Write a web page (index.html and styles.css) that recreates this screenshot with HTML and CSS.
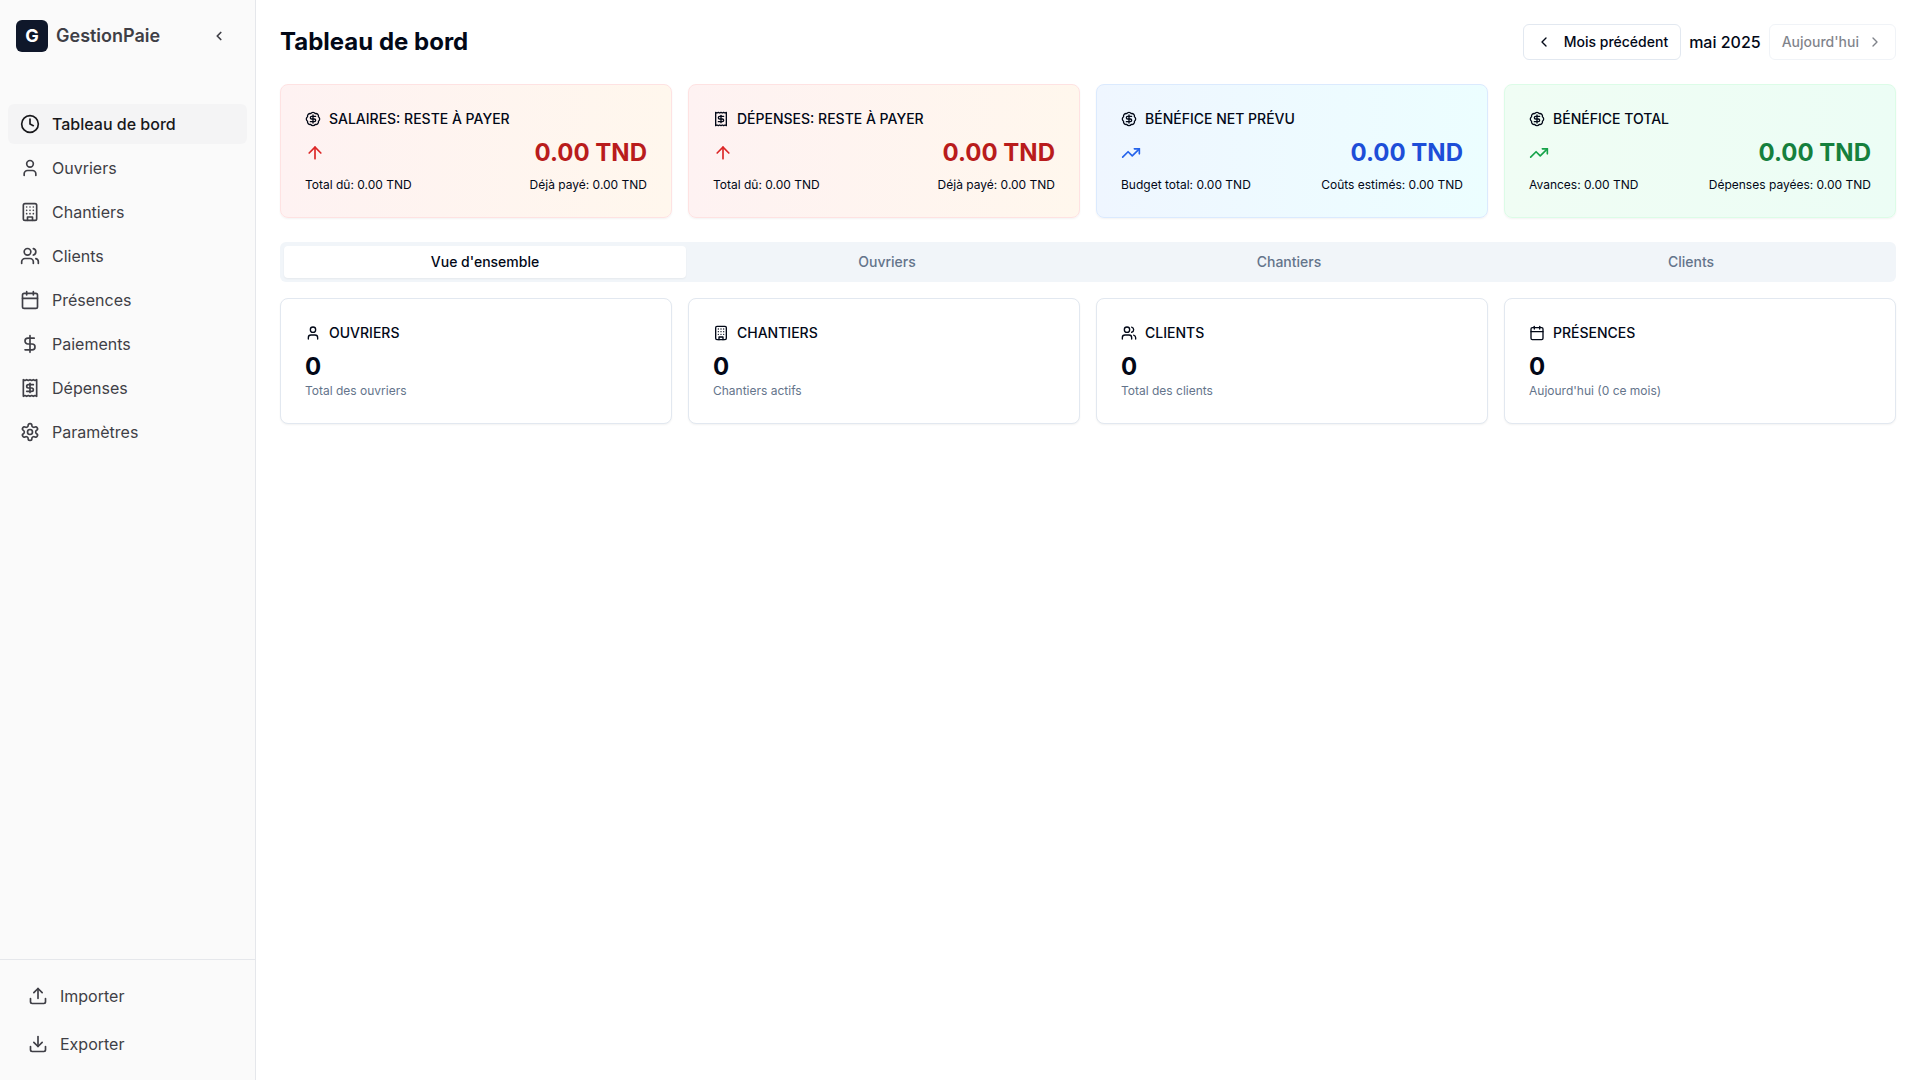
FILE: index.html
```html
<!DOCTYPE html>
<html lang="fr">
<head>
  <meta charset="UTF-8" />
  <meta name="viewport" content="width=device-width, initial-scale=1.0"/>
  <title>Tableau de bord - GestionPaie</title>
  <link rel="stylesheet" href="styles.css">
</head>
<body>
  <!-- Icons -->
  <svg class="icon-defs" aria-hidden="true">
    <symbol id="clock" viewBox="0 0 24 24"><circle cx="12" cy="12" r="10"/><path d="M12 6v6l4 2"/></symbol>
    <symbol id="user" viewBox="0 0 24 24"><path d="M19 21v-2a4 4 0 0 0-4-4H9a4 4 0 0 0-4 4v2"/><circle cx="12" cy="7" r="4"/></symbol>
    <symbol id="users" viewBox="0 0 24 24"><path d="M16 21v-2a4 4 0 0 0-4-4H6a4 4 0 0 0-4 4v2"/><circle cx="9" cy="7" r="4"/><path d="M22 21v-2a4 4 0 0 0-3-3.87"/><path d="M16 3.13a4 4 0 0 1 0 7.75"/></symbol>
    <symbol id="building" viewBox="0 0 24 24"><rect width="16" height="20" x="4" y="2" rx="2" ry="2"/><path d="M9 22v-4h6v4"/><path d="M8 6h.01"/><path d="M16 6h.01"/><path d="M12 6h.01"/><path d="M12 10h.01"/><path d="M12 14h.01"/><path d="M16 10h.01"/><path d="M16 14h.01"/><path d="M8 10h.01"/><path d="M8 14h.01"/></symbol>
    <symbol id="calendar" viewBox="0 0 24 24"><path d="M8 2v4"/><path d="M16 2v4"/><rect width="18" height="18" x="3" y="4" rx="2"/><path d="M3 10h18"/></symbol>
    <symbol id="dollar" viewBox="0 0 24 24"><path d="M12 2v20"/><path d="M17 5H9.5a3.5 3.5 0 0 0 0 7h5a3.5 3.5 0 0 1 0 7H6"/></symbol>
    <symbol id="receipt" viewBox="0 0 24 24"><path d="M4 2v20l2-1 2 1 2-1 2 1 2-1 2 1 2-1 2 1V2l-2 1-2-1-2 1-2-1-2 1-2-1-2 1Z"/><path d="M16 8h-6a2 2 0 1 0 0 4h4a2 2 0 1 1 0 4H8"/><path d="M12 17.5v-11"/></symbol>
    <symbol id="settings" viewBox="0 0 24 24"><path d="M12.22 2h-.44a2 2 0 0 0-2 2v.18a2 2 0 0 1-1 1.73l-.43.25a2 2 0 0 1-2 0l-.15-.08a2 2 0 0 0-2.73.73l-.22.38a2 2 0 0 0 .73 2.73l.15.1a2 2 0 0 1 1 1.72v.51a2 2 0 0 1-1 1.74l-.15.09a2 2 0 0 0-.73 2.73l.22.38a2 2 0 0 0 2.73.73l.15-.08a2 2 0 0 1 2 0l.43.25a2 2 0 0 1 1 1.73V20a2 2 0 0 0 2 2h.44a2 2 0 0 0 2-2v-.18a2 2 0 0 1 1-1.73l.43-.25a2 2 0 0 1 2 0l.15.08a2 2 0 0 0 2.73-.73l.22-.39a2 2 0 0 0-.73-2.73l-.15-.08a2 2 0 0 1-1-1.74v-.5a2 2 0 0 1 1-1.74l.15-.09a2 2 0 0 0 .73-2.73l-.22-.38a2 2 0 0 0-2.73-.73l-.15.08a2 2 0 0 1-2 0l-.43-.25a2 2 0 0 1-1-1.73V4a2 2 0 0 0-2-2z"/><circle cx="12" cy="12" r="3"/></symbol>
    <symbol id="upload" viewBox="0 0 24 24"><path d="M21 15v4a2 2 0 0 1-2 2H5a2 2 0 0 1-2-2v-4"/><path d="m17 8-5-5-5 5"/><path d="M12 3v12"/></symbol>
    <symbol id="download" viewBox="0 0 24 24"><path d="M21 15v4a2 2 0 0 1-2 2H5a2 2 0 0 1-2-2v-4"/><path d="m7 10 5 5 5-5"/><path d="M12 15V3"/></symbol>
    <symbol id="badge-dollar" viewBox="0 0 24 24"><path d="M3.85 8.62a4 4 0 0 1 4.78-4.77 4 4 0 0 1 6.74 0 4 4 0 0 1 4.78 4.78 4 4 0 0 1 0 6.74 4 4 0 0 1-4.77 4.78 4 4 0 0 1-6.75 0 4 4 0 0 1-4.78-4.77 4 4 0 0 1 0-6.76Z"/><path d="M16 8h-6a2 2 0 1 0 0 4h4a2 2 0 1 1 0 4H8"/><path d="M12 18V6"/></symbol>
    <symbol id="arrow-up" viewBox="0 0 24 24"><path d="m5 12 7-7 7 7"/><path d="M12 19V5"/></symbol>
    <symbol id="trending-up" viewBox="0 0 24 24"><path d="m22 7-8.5 8.5-5-5L2 17"/><path d="M16 7h6v6"/></symbol>
    <symbol id="chevron-left" viewBox="0 0 24 24"><path d="m15 18-6-6 6-6"/></symbol>
    <symbol id="chevron-right" viewBox="0 0 24 24"><path d="m9 18 6-6-6-6"/></symbol>
  </svg>

  <div class="layout">
    <aside class="sidebar">
      <div class="sidebar-header">
        <div class="brand">
          <span class="logo">G</span>
          <span class="brand-name">GestionPaie</span>
        </div>
        <button type="button" class="collapse-btn" aria-label="Réduire le menu">
          <svg class="icon-xs"><use href="#chevron-left"/></svg>
        </button>
      </div>

      <nav class="sidebar-nav">
        <a href="#" class="nav-link active"><svg class="icon"><use href="#clock"/></svg>Tableau de bord</a>
        <a href="#" class="nav-link"><svg class="icon"><use href="#user"/></svg>Ouvriers</a>
        <a href="#" class="nav-link"><svg class="icon"><use href="#building"/></svg>Chantiers</a>
        <a href="#" class="nav-link"><svg class="icon"><use href="#users"/></svg>Clients</a>
        <a href="#" class="nav-link"><svg class="icon"><use href="#calendar"/></svg>Présences</a>
        <a href="#" class="nav-link"><svg class="icon"><use href="#dollar"/></svg>Paiements</a>
        <a href="#" class="nav-link"><svg class="icon"><use href="#receipt"/></svg>Dépenses</a>
        <a href="#" class="nav-link"><svg class="icon"><use href="#settings"/></svg>Paramètres</a>
      </nav>

      <div class="sidebar-footer">
        <button type="button" class="nav-link"><svg class="icon"><use href="#upload"/></svg>Importer</button>
        <button type="button" class="nav-link"><svg class="icon"><use href="#download"/></svg>Exporter</button>
      </div>
    </aside>

    <main class="content">
      <header class="page-header">
        <h1>Tableau de bord</h1>
        <div class="month-nav">
          <button type="button" class="month-btn prev"><svg class="icon-sm"><use href="#chevron-left"/></svg>Mois précédent</button>
          <span class="month-label">mai 2025</span>
          <button type="button" class="month-btn" disabled>Aujourd'hui<svg class="icon-sm"><use href="#chevron-right"/></svg></button>
        </div>
      </header>

      <section class="card-grid">
        <div class="card card-red">
          <h2 class="card-title"><svg class="icon-sm"><use href="#badge-dollar"/></svg>SALAIRES: RESTE À PAYER</h2>
          <div class="card-row">
            <svg class="icon"><use href="#arrow-up"/></svg>
            <span class="card-value">0.00 TND</span>
          </div>
          <div class="card-details"><span>Total dû: 0.00 TND</span><span>Déjà payé: 0.00 TND</span></div>
        </div>

        <div class="card card-red">
          <h2 class="card-title"><svg class="icon-sm"><use href="#receipt"/></svg>DÉPENSES: RESTE À PAYER</h2>
          <div class="card-row">
            <svg class="icon"><use href="#arrow-up"/></svg>
            <span class="card-value">0.00 TND</span>
          </div>
          <div class="card-details"><span>Total dû: 0.00 TND</span><span>Déjà payé: 0.00 TND</span></div>
        </div>

        <div class="card card-blue">
          <h2 class="card-title"><svg class="icon-sm"><use href="#badge-dollar"/></svg>BÉNÉFICE NET PRÉVU</h2>
          <div class="card-row">
            <svg class="icon"><use href="#trending-up"/></svg>
            <span class="card-value">0.00 TND</span>
          </div>
          <div class="card-details"><span>Budget total: 0.00 TND</span><span>Coûts estimés: 0.00 TND</span></div>
        </div>

        <div class="card card-green">
          <h2 class="card-title"><svg class="icon-sm"><use href="#badge-dollar"/></svg>BÉNÉFICE TOTAL</h2>
          <div class="card-row">
            <svg class="icon"><use href="#trending-up"/></svg>
            <span class="card-value">0.00 TND</span>
          </div>
          <div class="card-details"><span>Avances: 0.00 TND</span><span>Dépenses payées: 0.00 TND</span></div>
        </div>
      </section>

      <section class="overview">
        <div class="tabs" role="tablist">
          <button type="button" class="tab active" role="tab" aria-selected="true">Vue d'ensemble</button>
          <button type="button" class="tab" role="tab" aria-selected="false">Ouvriers</button>
          <button type="button" class="tab" role="tab" aria-selected="false">Chantiers</button>
          <button type="button" class="tab" role="tab" aria-selected="false">Clients</button>
        </div>

        <div class="card-grid">
          <div class="card">
            <h2 class="card-title"><svg class="icon-sm"><use href="#user"/></svg>OUVRIERS</h2>
            <div class="card-value">0</div>
            <p class="card-note">Total des ouvriers</p>
          </div>
          <div class="card">
            <h2 class="card-title"><svg class="icon-sm"><use href="#building"/></svg>CHANTIERS</h2>
            <div class="card-value">0</div>
            <p class="card-note">Chantiers actifs</p>
          </div>
          <div class="card">
            <h2 class="card-title"><svg class="icon-sm"><use href="#users"/></svg>CLIENTS</h2>
            <div class="card-value">0</div>
            <p class="card-note">Total des clients</p>
          </div>
          <div class="card">
            <h2 class="card-title"><svg class="icon-sm"><use href="#calendar"/></svg>PRÉSENCES</h2>
            <div class="card-value">0</div>
            <p class="card-note">Aujourd'hui (0 ce mois)</p>
          </div>
        </div>
      </section>
    </main>
  </div>
</body>
</html>
```

FILE: styles.css
```css
* {
  box-sizing: border-box;
}

body {
  margin: 0;
  background-color: white;
  font-family: Inter, "Liberation Sans", sans-serif;
  font-size: 16px;
  line-height: 24px;
  color: #020817;
}

h1, h2, p {
  margin: 0;
}

button {
  font: inherit;
  color: inherit;
  background: none;
  border: none;
  padding: 0;
  cursor: pointer;
}

.icon-defs {
  display: none;
}

.icon, .icon-sm, .icon-xs {
  width: 20px;
  height: 20px;
  flex-shrink: 0;
  fill: none;
  stroke: currentColor;
  stroke-width: 2;
  stroke-linecap: round;
  stroke-linejoin: round;
}

.icon-sm {
  width: 16px;
  height: 16px;
}

.icon-xs {
  width: 14px;
  height: 14px;
  stroke-width: 3;
}

.layout {
  display: flex;
  min-height: 100vh;
}

/* Sidebar */
.sidebar {
  display: flex;
  flex-direction: column;
  flex-shrink: 0;
  width: 256px;
  background-color: #fafafa;
  border-right: 1px solid #e5e7eb;
  color: #3f3f46;
}

.sidebar-header {
  display: flex;
  align-items: center;
  justify-content: space-between;
  padding: 16px;
}

.brand {
  display: flex;
  align-items: center;
  gap: 8px;
}

.logo {
  display: flex;
  align-items: center;
  justify-content: center;
  width: 32px;
  height: 32px;
  border-radius: 6px;
  background-color: #0f172a;
  color: white;
  font-size: 18px;
  font-weight: bold;
}

.brand-name {
  font-size: 18px;
  font-weight: 600;
}

.collapse-btn {
  display: flex;
  align-items: center;
  justify-content: center;
  width: 40px;
  height: 40px;
}

.sidebar-nav {
  display: flex;
  flex-direction: column;
  flex: 1;
  gap: 4px;
  padding: 32px 8px;
}

.nav-link {
  display: flex;
  align-items: center;
  gap: 12px;
  height: 40px;
  padding: 0 12px;
  border-radius: 6px;
  color: #3f3f46;
  text-decoration: none;
}

.nav-link:hover, .nav-link.active {
  background-color: #f4f4f5;
  color: #18181b;
}

.nav-link.active {
  font-weight: 500;
}

.sidebar-footer {
  display: flex;
  flex-direction: column;
  gap: 8px;
  padding: 16px;
  border-top: 1px solid #e5e7eb;
}

/* Page */
.content {
  display: flex;
  flex-direction: column;
  flex: 1;
  gap: 24px;
  padding: 24px;
}

.page-header {
  display: flex;
  align-items: center;
  justify-content: space-between;
}

h1 {
  font-size: 24px;
  line-height: 32px;
  font-weight: bold;
}

.month-nav {
  display: flex;
  align-items: center;
  gap: 8px;
}

.month-label {
  font-weight: 500;
}

.month-btn {
  display: flex;
  align-items: center;
  gap: 8px;
  height: 36px;
  padding: 0 12px;
  border: 1px solid #e2e8f0;
  border-radius: 6px;
  font-size: 14px;
  font-weight: 500;
}

.month-btn.prev {
  gap: 12px;
}

.month-btn:disabled {
  opacity: 0.5;
  cursor: default;
}

/* Cards */
.card-grid {
  display: grid;
  grid-template-columns: repeat(4, 1fr);
  gap: 16px;
}

.card {
  padding: 24px;
  background-color: white;
  border: 1px solid #e2e8f0;
  border-radius: 8px;
  box-shadow: 0 1px 2px rgba(0, 0, 0, 0.05);
}

.card-title {
  display: flex;
  align-items: center;
  gap: 8px;
  margin-bottom: 8px;
  font-size: 14px;
  line-height: 20px;
  font-weight: 500;
}

.card-row, .card-details {
  display: flex;
  align-items: center;
  justify-content: space-between;
}

.card-value {
  font-size: 24px;
  line-height: 32px;
  font-weight: bold;
}

.card-details {
  margin-top: 8px;
  font-size: 12px;
  line-height: 16px;
}

.card-note {
  font-size: 12px;
  line-height: 16px;
  color: #64748b;
}

.card-red {
  background: linear-gradient(to right, #fef2f2, #fff7ed);
  border-color: #fee2e2;
}

.card-red .icon {
  color: #dc2626;
}

.card-red .card-value {
  color: #b91c1c;
}

.card-blue {
  background: linear-gradient(to right, #eff6ff, #ecfeff);
  border-color: #dbeafe;
}

.card-blue .icon {
  color: #2563eb;
}

.card-blue .card-value {
  color: #1d4ed8;
}

.card-green {
  background: linear-gradient(to right, #f0fdf4, #ecfdf5);
  border-color: #dcfce7;
}

.card-green .icon {
  color: #16a34a;
}

.card-green .card-value {
  color: #15803d;
}

/* Tabs */
.overview {
  display: flex;
  flex-direction: column;
  gap: 16px;
}

.tabs {
  display: grid;
  grid-template-columns: repeat(4, 1fr);
  padding: 4px;
  border-radius: 6px;
  background-color: #f1f5f9;
}

.tab {
  height: 32px;
  border-radius: 4px;
  font-size: 14px;
  line-height: 20px;
  font-weight: 500;
  color: #64748b;
}

.tab.active {
  background-color: white;
  color: #020817;
  box-shadow: 0 1px 2px rgba(0, 0, 0, 0.05);
}
```
